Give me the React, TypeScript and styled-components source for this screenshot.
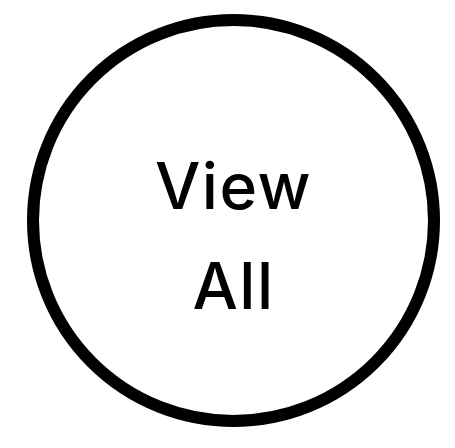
import React from "react";
import styled, { createGlobalStyle } from "styled-components";

const Global = createGlobalStyle`
  html, body { margin: 0; padding: 0; background: #ffffff; }
  body { font-family: Inter, "Open Sans", sans-serif; }
`;

const Page = styled.div`
  width: 455px;
  height: 448px;
  box-sizing: border-box;
  padding: 14px 0 0 27px;
`;

const Circle = styled.a`
  width: 413px;
  height: 413px;
  box-sizing: border-box;
  border: 12.5px solid #000000;
  border-radius: 50%;
  display: flex;
  flex-direction: column;
  align-items: center;
  justify-content: center;
  padding-top: 30px;
  color: #000000;
  text-decoration: none;
`;

const Label = styled.span`
  font-family: Inter, "Open Sans", sans-serif;
  font-weight: 500;
  font-size: 64px;
  line-height: 100px;
  text-align: center;
  letter-spacing: 1.5px;
`;

export default function App() {
  return (
    <>
      <Global />
      <Page>
        <Circle href="#">
          <Label>View</Label>
          <Label>All</Label>
        </Circle>
      </Page>
    </>
  );
}
